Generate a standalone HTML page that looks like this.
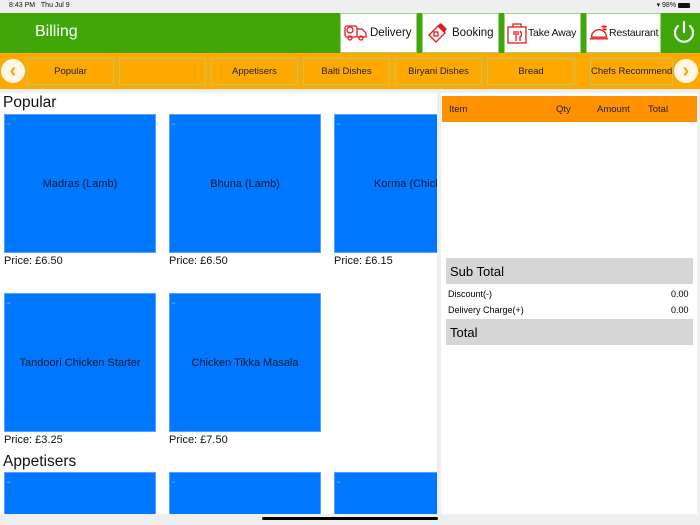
<!DOCTYPE html>
<html><head><meta charset="utf-8"><style>
*{margin:0;padding:0;box-sizing:border-box}
body{width:700px;height:525px;overflow:hidden;background:#efefef;font-family:"Liberation Sans",sans-serif;position:relative;color:#000}
.a{position:absolute}
.hb{position:absolute;top:13px;height:40px;background:#fff;border:1px solid #9fd08a;display:flex;align-items:center;font-size:11.5px;color:#111;white-space:nowrap;overflow:hidden}
.hb svg{margin:0 2px 0 3px;flex:none}
.cat{position:absolute;top:58px;height:27px;border:1px solid #b5c96a;font-size:9.5px;display:flex;align-items:center;justify-content:center;color:#222;white-space:nowrap;overflow:hidden}
.tile{position:absolute;background:#0077ff;border:1px solid #5aa0ff;font-size:11px;color:#0a1a33;display:flex;align-items:center;justify-content:center;white-space:nowrap;overflow:hidden}
.tile:before{content:"···";position:absolute;left:1px;top:6px;color:#cfe3ff;font-size:7px;letter-spacing:-1px}
.pr{position:absolute;font-size:11px;color:#111}
.sec{position:absolute;font-size:15.5px;color:#111}
.circ{position:absolute;width:24px;height:24px;border-radius:50%;background:#fff7e6;color:#f5a600;font-weight:bold;font-size:20px;display:flex;align-items:center;justify-content:center;line-height:1}
</style></head><body>
<div class="a" style="left:0;top:0;width:700px;height:12px;background:#efefef;font-size:7px;line-height:12px;padding-left:9px;color:#111">8:43 PM&nbsp;&nbsp;&nbsp;Thu Jul 9</div>
<div class="a" style="right:10px;top:0;font-size:7px;line-height:12px;color:#111">&#9662; 98% <span style="display:inline-block;width:12px;height:5px;background:#111;border-radius:1px;vertical-align:middle"></span></div>
<div class="a" style="left:0;top:13px;width:700px;height:40px;background:#3fa70a"></div>
<div class="a" style="left:35px;top:23px;font-size:16px;color:#fff">Billing</div>
<div class="hb" style="left:340px;width:77px"><svg width="24" height="20" viewBox="0 0 24 20" fill="none" stroke="#e41b1b" stroke-width="1.3"><rect x="1" y="3" width="12" height="11" rx="2"/><path d="M13 6h5l4 4v4h-9"/><circle cx="6" cy="15" r="2"/><circle cx="17" cy="15" r="2"/><circle cx="6" cy="7" r="3"/></svg>Delivery</div>
<div class="hb" style="left:422px;width:77px"><svg width="24" height="20" viewBox="0 0 24 20" fill="none" stroke="#e41b1b" stroke-width="1.3"><path d="M3 12l9-9 7 7-9 9z"/><path d="M12 3l3-2 5 5-2 3" fill="#e41b1b"/><rect x="8" y="9" width="4" height="4"/></svg>Booking</div>
<div class="hb" style="left:504px;width:77px;font-size:10.5px;letter-spacing:-0.2px"><svg width="20" height="22" viewBox="0 0 20 22" fill="none" stroke="#e41b1b" stroke-width="1.3" style="margin:0 1px 0 2px"><rect x="1" y="5" width="18" height="16"/><path d="M6 5V2h8v3"/><path d="M7 9v4M9 9v4M11 9v4M9 13v6M13 9c2 2 2 5 0 6v4"/></svg>Take Away</div>
<div class="hb" style="left:586px;width:75px;font-size:10.5px;letter-spacing:-0.2px"><svg width="20" height="18" viewBox="0 0 24 20" fill="none" stroke="#e41b1b" stroke-width="1.6" style="margin:0 0 0 2px"><path d="M3 15a9 9 0 0 1 18 0z"/><path d="M1 17h22"/><path d="M15 2h6M16 4h5M17 6h4"/></svg>Restaurant</div>
<svg class="a" style="left:672px;top:20px" width="24" height="26" viewBox="0 0 24 26" fill="none" stroke="#fff" stroke-width="2.2" stroke-linecap="round"><path d="M12 2v10"/><path d="M6 6a9 9 0 1 0 12 0"/></svg>
<div class="a" style="left:0;top:53px;width:700px;height:36px;background:#ffa800"></div>
<div class="cat" style="left:27px;width:87px">Popular</div>
<div class="cat" style="left:119px;width:87px"></div>
<div class="cat" style="left:211px;width:87px">Appetisers</div>
<div class="cat" style="left:303px;width:87px">Balti Dishes</div>
<div class="cat" style="left:395px;width:87px">Biryani Dishes</div>
<div class="cat" style="left:487px;width:88px">Bread</div>
<div class="cat" style="left:590px;width:83px;justify-content:flex-start;padding-left:0">Chefs Recommendations</div>
<div class="circ" style="left:1px;top:59px">&#8249;</div>
<div class="circ" style="left:674px;top:59px">&#8250;</div>
<div class="a" style="left:0;top:93px;width:437px;height:421px;background:#fff;overflow:hidden">
<div class="sec" style="left:3px;top:1px">Popular</div>
<div class="tile" style="left:4px;top:21px;width:152px;height:139px">Madras (Lamb)</div>
<div class="tile" style="left:169px;top:21px;width:152px;height:139px">Bhuna (Lamb)</div>
<div class="tile" style="left:334px;top:21px;width:152px;height:139px;justify-content:flex-start;padding-left:39px">Korma (Chicken)</div>
<div class="pr" style="left:4px;top:162px">Price: £6.50</div>
<div class="pr" style="left:169px;top:162px">Price: £6.50</div>
<div class="pr" style="left:334px;top:162px">Price: £6.15</div>
<div class="tile" style="left:4px;top:200px;width:152px;height:139px">Tandoori Chicken Starter</div>
<div class="tile" style="left:169px;top:200px;width:152px;height:139px">Chicken Tikka Masala</div>
<div class="pr" style="left:4px;top:341px">Price: £3.25</div>
<div class="pr" style="left:169px;top:341px">Price: £7.50</div>
<div class="sec" style="left:3px;top:360px">Appetisers</div>
<div class="tile" style="left:4px;top:379px;width:152px;height:60px"></div>
<div class="tile" style="left:169px;top:379px;width:152px;height:60px"></div>
<div class="tile" style="left:334px;top:379px;width:152px;height:60px"></div>
</div>
<div class="a" style="left:441px;top:93px;width:256px;height:421px;background:#fff"></div>
<div class="a" style="left:442px;top:96px;width:255px;height:26px;background:#ff9200;font-size:9.5px;color:#222">
<span class="a" style="left:7px;top:8px">Item</span><span class="a" style="left:114px;top:8px">Qty</span><span class="a" style="left:155px;top:8px">Amount</span><span class="a" style="left:206px;top:8px">Total</span></div>
<div class="a" style="left:446px;top:258px;width:247px;height:26px;background:#d6d6d6;font-size:13px;padding:6px 0 0 4px">Sub Total</div>
<div class="a" style="left:448px;top:289px;font-size:9px">Discount(-)</div>
<div class="a" style="left:671px;top:289px;font-size:9px">0.00</div>
<div class="a" style="left:448px;top:305px;font-size:9px">Delivery Charge(+)</div>
<div class="a" style="left:671px;top:305px;font-size:9px">0.00</div>
<div class="a" style="left:446px;top:319px;width:247px;height:26px;background:#d6d6d6;font-size:13px;padding:6px 0 0 4px">Total</div>
<div class="a" style="left:262px;top:517px;width:176px;height:3px;border-radius:2px;background:#000"></div>
</body></html>
